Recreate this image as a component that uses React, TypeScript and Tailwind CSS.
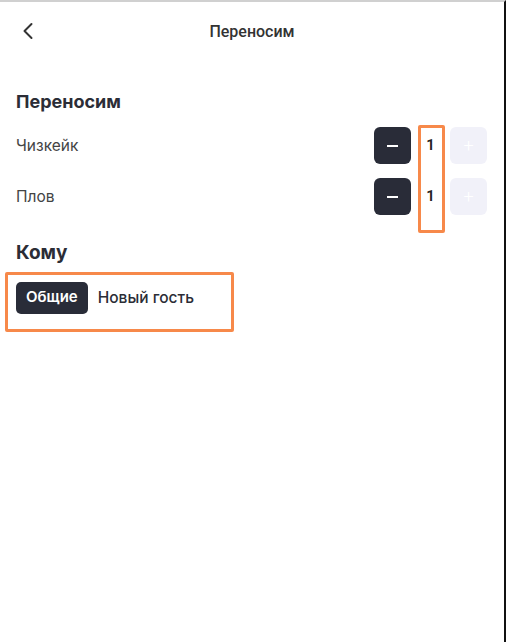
import { ChevronLeft } from "lucide-react";

const items = [
  { name: "Чизкейк", qty: 1 },
  { name: "Плов", qty: 1 },
];

function Stepper({ qty }: { qty: number }) {
  return (
    <div className="flex items-center gap-[6px]">
      <button className="flex h-[37px] w-[37px] items-center justify-center rounded-[6px] bg-[#292c38]">
        <span className="block h-[2px] w-[11px] bg-white" />
      </button>
      <span className="w-[27px] text-center text-[15px] font-semibold text-[#222]">{qty}</span>
      <button className="flex h-[37px] w-[37px] items-center justify-center rounded-[6px] bg-[#f1f1f9] text-[18px] font-light text-white">
        +
      </button>
    </div>
  );
}

export default function App() {
  return (
    <div
      className="relative h-[642px] w-[506px] overflow-hidden border-t-2 border-r-2 border-t-[#d0d0d0] border-r-[#111] bg-white text-[#2b2d36]"
      style={{ fontFamily: "Roboto, 'Noto Sans', sans-serif" }}
    >
      <header className="relative flex h-[60px] items-center justify-center">
        <ChevronLeft className="absolute left-[14px] top-[15px] h-[28px] w-[28px] text-[#333]" strokeWidth={1.7} />
        <h1 className="text-[16px] font-medium text-[#333]">Переносим</h1>
      </header>

      <section className="px-4 pt-[26px]">
        <h2 className="text-[18px] font-bold text-[#2b2d36]" style={{ fontFamily: "Inter, sans-serif" }}>
          Переносим
        </h2>
        <div className="relative mt-[12px] flex flex-col gap-[14px]">
          {items.map((it) => (
            <div key={it.name} className="flex h-[37px] items-center justify-between pr-[1px]">
              <span className="text-[15.5px] text-[#444]" style={{ fontFamily: "Inter, sans-serif" }}>
                {it.name}
              </span>
              <Stepper qty={it.qty} />
            </div>
          ))}
          <div className="pointer-events-none absolute right-[43px] top-[-2px] h-[108px] w-[27px] rounded-[2px] border-[3px] border-[#f7894a]" />
        </div>

        <h2 className="mt-[24px] text-[19px] font-bold text-[#2b2d36]" style={{ fontFamily: "Inter, sans-serif" }}>
          Кому
        </h2>
        <div className="relative mt-[14px] flex items-center gap-[10px]">
          <button
            className="flex h-[32px] items-center rounded-[5px] bg-[#292c38] px-[10px] text-[15px] font-semibold text-white"
            style={{ fontFamily: "Inter, sans-serif" }}
          >
            Общие
          </button>
          <span className="text-[15.5px] font-medium text-[#2b2d36]" style={{ fontFamily: "Inter, sans-serif" }}>
            Новый гость
          </span>
          <div className="pointer-events-none absolute left-[-11px] top-[-10px] h-[60px] w-[229px] rounded-[2px] border-[3px] border-[#f7894a]" />
        </div>
      </section>
    </div>
  );
}
